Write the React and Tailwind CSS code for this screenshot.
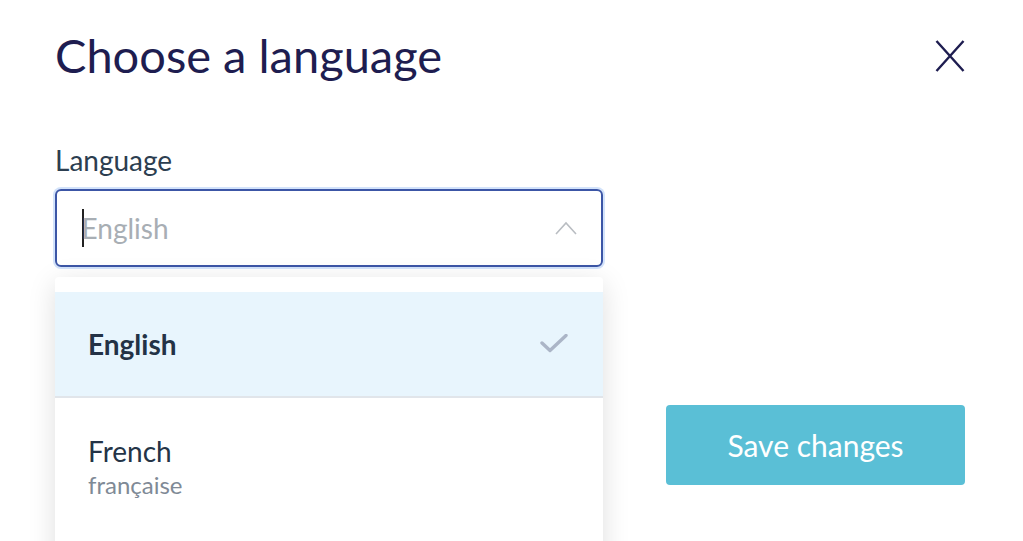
import React, { useState } from 'react';

const languages = [
  { code: 'en', name: 'English', native: null },
  { code: 'fr', name: 'French', native: 'française' },
];

const CloseIcon = () => (
  <svg width="30" height="32" viewBox="0 0 30 32" fill="none" stroke="#1e1d50" strokeWidth="2.4" strokeLinecap="butt">
    <path d="M1.5 1 L28.5 31 M28.5 1 L1.5 31" />
  </svg>
);

const ChevronUp = () => (
  <svg width="22" height="14" viewBox="0 0 22 14" fill="none" stroke="#b9bdc2" strokeWidth="1.6">
    <path d="M1 13 L11 2 L21 13" />
  </svg>
);

const Check = () => (
  <svg width="28" height="20" viewBox="0 0 28 20" fill="none" stroke="#abb5c7" strokeWidth="3.4" strokeLinecap="round" strokeLinejoin="round">
    <path d="M2 9 L10 16.5 L26 1.5" />
  </svg>
);

export default function App() {
  const [selected] = useState('en');

  return (
    <div className="w-[1023px] h-[541px] bg-white overflow-hidden" style={{ fontFamily: 'Lato, "Noto Sans", sans-serif' }}>
      {/* header */}
      <div className="flex justify-between items-start pl-[55px] pr-[58px] pt-[27px]">
        <h1 className="text-[47px] leading-[56px] font-normal text-[#1e1d50]">Choose a language</h1>
        <button className="mt-[13px]">
          <CloseIcon />
        </button>
      </div>

      <div className="pl-[55px] pr-[58px] mt-[60px]">
        <div className="relative w-[548px]">
          <label className="block text-[28px] leading-[34px] text-[#2c3e50] mb-[12px]">Language</label>
          <div className="h-[78px] rounded-[6px] border-2 border-[#3c56a6] ring-2 ring-[#d3e3fb] flex items-center justify-between pl-[25px] pr-[24px]">
            <div className="flex items-center">
              <span className="w-[1.5px] h-[38px] bg-[#222] mr-[-2px]" />
              <span className="text-[28px] text-[#a8aeb4]">English</span>
            </div>
            <ChevronUp />
          </div>

          {/* dropdown */}
          <div className="absolute left-0 top-full mt-[10px] w-[548px] h-[300px] bg-white rounded-[4px] shadow-[0_6px_28px_rgba(0,0,0,0.13)] pt-[15px] z-10">
            {languages.map((lang) => (
              <div
                key={lang.code}
                className={
                  lang.code === selected
                    ? 'h-[106px] bg-[#e8f5fd] flex items-center justify-between pl-[33px] pr-[35px] border-b-2 border-[#e1e5ea]'
                    : 'h-[130px] flex flex-col pt-[36px] pl-[33px] pr-[35px]'
                }
              >
                {lang.code === selected ? (
                  <>
                    <span className="text-[28px] font-bold text-[#233246]">{lang.name}</span>
                    <Check />
                  </>
                ) : (
                  <>
                    <span className="text-[28px] leading-[34px] text-[#243447]">{lang.name}</span>
                    <span className="text-[24px] leading-[30px] mt-[2px] text-[#7f8a96]">{lang.native}</span>
                  </>
                )}
              </div>
            ))}
          </div>
        </div>

        <div className="flex justify-end mt-[138px]">
          <button className="w-[299px] h-[80px] rounded-[4px] bg-[#5abfd6] text-white text-[30px]">
            Save changes
          </button>
        </div>
      </div>
    </div>
  );
}
